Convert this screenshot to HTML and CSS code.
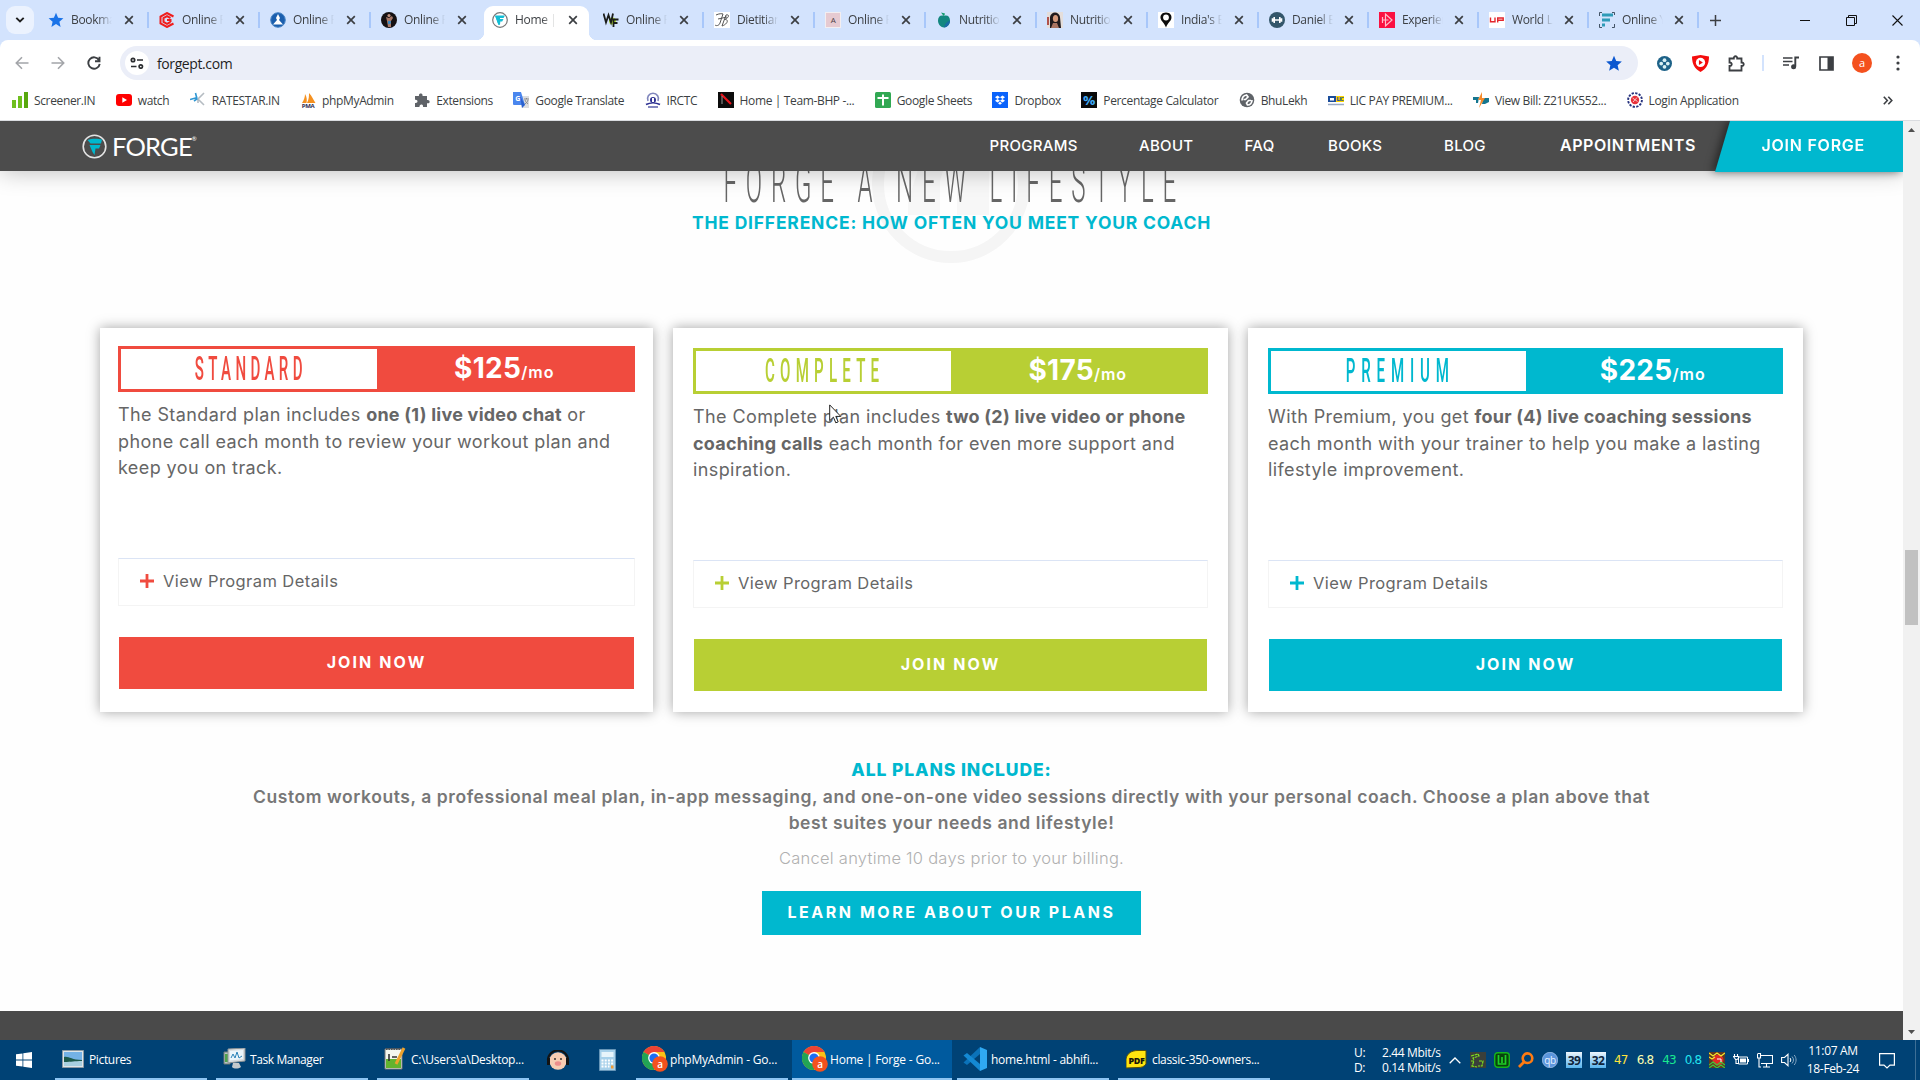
FILE: index.html
```html
<!DOCTYPE html>
<html lang="en">
<head>
<meta charset="utf-8">
<title>Home | Forge</title>
<link rel="stylesheet" href="styles.css">
</head>
<body>
<svg class="defs" aria-hidden="true">
  <symbol id="x" viewBox="0 0 10 10"><path d="M1.2 1.2l7.6 7.6M8.8 1.2L1.2 8.8" stroke="#3c3f43" stroke-width="1.7" fill="none"/></symbol>
  <symbol id="star" viewBox="0 0 16 16"><path d="M8 .8l2.1 4.9 5.3.5-4 3.5 1.200 5.200L8 12.100 3.400 14.900l1.200-5.200-4-3.500 5.300-.5z"/></symbol>
  <symbol id="chrome" viewBox="0 0 26 30">
    <circle cx="12" cy="12" r="12" fill="#fbc116"/>
    <path d="M12 12L1.600 6A12 12 0 0 1 22.400 6H12z" fill="#ea4335"/>
    <path d="M12 12L1.600 6A12 12 0 0 0 12 24L17.200 15z" fill="#22a455"/>
    <circle cx="12" cy="12" r="5.900" fill="#fff"/><circle cx="12" cy="12" r="4.600" fill="#1b6ef3"/>
    <circle cx="18" cy="18" r="7.800" fill="#f4511e"/>
    <text x="18" y="21.500" font-size="10" font-weight="600" text-anchor="middle" fill="#fff">a</text>
  </symbol>
  <symbol id="plus" viewBox="0 0 14 14"><path d="M7 0v14M0 7h14" stroke="currentColor" stroke-width="2.800"/></symbol>
</svg>

<div class="tabs">
  <div class="tab-search"><svg width="10" height="8" viewBox="0 0 10 8"><path d="M1.300 1.800L5 5.500l3.700-3.700" fill="none" stroke="#1f1f1f" stroke-width="1.900"/></svg></div>
  <div class="tab"><svg class="fav" fill="#1a73e8"><use href="#star"/></svg><span>Bookmarks</span><svg class="close"><use href="#x"/></svg></div>
  <div class="tab"><svg class="fav" viewBox="0 0 16 16"><path d="M14.500 4.500L8 1 1.500 4.500v7L8 15l6.500-3.500M11.500 6L8 4.200 4.500 6v4L8 11.800 11.500 10M8 8h3.500v2" fill="none" stroke="#f01d1d" stroke-width="2"/></svg><span>Online F</span><svg class="close"><use href="#x"/></svg></div>
  <div class="tab"><svg class="fav" viewBox="0 0 16 16"><circle cx="8" cy="8" r="7.300" fill="#1b5fae" stroke="#4a86c6"/><path d="M8 2l2 4-1 2 4 4.500H3L7 8 6 6z" fill="#fff"/></svg><span>Online F</span><svg class="close"><use href="#x"/></svg></div>
  <div class="tab before-active"><svg class="fav" viewBox="0 0 16 16"><circle cx="8" cy="8" r="8" fill="#151112"/><path d="M5 5l3 1 3-2 1 2-2 3v6H7l-1-6z" fill="#a87968"/><path d="M7 9h3l-.5 3H7z" fill="#3d8ac0"/><circle cx="8" cy="3.500" r="1.600" fill="#c49481"/></svg><span>Online F</span><svg class="close"><use href="#x"/></svg></div>
  <div class="tab active"><svg class="fav" viewBox="0 0 16 16"><circle cx="8" cy="8" r="7.300" fill="#fff" stroke="#777" stroke-width="1.200"/><path d="M3 3.500h10L11.500 6H8v1h3.500L10.200 9.400H8.300L8 12.800 6.500 13z" fill="#13bed5"/><path d="M3 3.500l3.500 9.500 1-6z" fill="#13bed5"/></svg><span>Home | F</span><svg class="close"><use href="#x"/></svg></div>
  <div class="tab"><svg class="fav" viewBox="0 0 16 16"><circle cx="9.500" cy="9" r="3.500" fill="#b5e236"/><path d="M.5 1.500l2.500 9L5.500 3 8 10.500 10 1.500M10.500 15V7.500h5M10.500 11h4" fill="none" stroke="#191c1a" stroke-width="1.800"/></svg><span>Online F</span><svg class="close"><use href="#x"/></svg></div>
  <div class="tab"><svg class="fav" viewBox="0 0 16 16"><path fill="#fff" d="M0 0h16v16H0z"/><path d="M2 3c3-1.500 6-1.500 7-1L6 11c-1 3-4 3-5 2M8 14L12 3c4-1 3 3-1.500 4.500C15 7 14 12 8 14M4 7l9-2" fill="none" stroke="#555" stroke-width="1"/></svg><span>Dietitian</span><svg class="close"><use href="#x"/></svg></div>
  <div class="tab"><svg class="fav" viewBox="0 0 16 16"><path fill="#f3eef0" d="M0 0h16v16H0z"/><path fill="#e6cad1" d="M1 1h14v14H1z"/><text x="8" y="11" font-size="8" text-anchor="middle" fill="#4b3d42">A</text></svg><span>Online F</span><svg class="close"><use href="#x"/></svg></div>
  <div class="tab"><svg class="fav" viewBox="0 0 16 16"><path d="M8 4c3-1.500 6 .5 6 4.500 0 4-3 7-6 7s-6-3-6-7C2 4.500 5 2.500 8 4z" fill="#13877f"/><path d="M8 15.500c3 0 6-3 6-7-3 1-5 3-6 7z" fill="#1a6aa5"/><path d="M5 .5l4 1-1 3z" fill="#129b6d"/></svg><span>Nutrition</span><svg class="close"><use href="#x"/></svg></div>
  <div class="tab"><svg class="fav" viewBox="0 0 16 16"><path fill="#e4dedb" d="M0 0h16v16H0z"/><path d="M3 16V5c1-6 9-6 10 0l1 11z" fill="#201a1d"/><ellipse cx="8.500" cy="6.500" rx="2.600" ry="3.600" fill="#d69a7c"/><path d="M4 16l2-5h4l2 5z" fill="#a97462"/><path d="M0 5h2v8H0z" fill="#b1534b"/></svg><span>Nutrition</span><svg class="close"><use href="#x"/></svg></div>
  <div class="tab"><svg class="fav" viewBox="0 0 16 16"><path fill="#fff" d="M0 0h16v16H0z"/><path d="M8 .5c4 0 6.300 3 5.300 6.200C12.500 9.500 9.500 11 8 15.500 6.500 11 3.500 9.500 2.700 6.700 1.700 3.500 4 .5 8 .5z" fill="#0c0c0c"/><circle cx="8" cy="5.500" r="2.900" fill="#fff"/></svg><span>India's B</span><svg class="close"><use href="#x"/></svg></div>
  <div class="tab n"><svg class="fav" viewBox="0 0 16 16"><circle cx="8" cy="8" r="8" fill="#33566a"/><path d="M3.500 8h9M5.200 5v6M10.800 5v6M3.500 6.200v3.600M12.500 6.200v3.600" stroke="#fff" stroke-width="1.600"/></svg><span>Daniel B</span><svg class="close"><use href="#x"/></svg></div>
  <div class="tab n"><svg class="fav" viewBox="0 0 16 16"><path fill="#fb1141" d="M0 0h16v16H0z"/><path d="M3.500 8h6M6.500 2v12l6.500-6zM3.500 5v6" fill="none" stroke="#ffc0cc" stroke-width="1.200"/></svg><span>Experience</span><svg class="close"><use href="#x"/></svg></div>
  <div class="tab n"><svg class="fav" viewBox="0 0 16 16"><path fill="#fff" d="M0 0h16v16H0z"/><path d="M1.500 5.500v4.200h4.500V5.500M8.700 10.500V6h5.500v2.300H8.700" fill="none" stroke="#e4262c" stroke-width="1.400"/></svg><span>World L</span><svg class="close"><use href="#x"/></svg></div>
  <div class="tab n"><svg class="fav" viewBox="0 0 16 16"><path d="M3 3h11M3 8h8M3 13h3" stroke="#2e9bb8" stroke-width="3"/><path d="M.5 4V.5H3M13 .5h2.500V3M.5 12v3.500H3M15.500 12v3.500H13" fill="none" stroke="#345" stroke-width=".9"/></svg><span>Online Y</span><svg class="close"><use href="#x"/></svg></div>
  <svg class="newtab" width="11" height="11" viewBox="0 0 11 11"><path d="M5.500 0v11M0 5.500h11" stroke="#3c3f43" stroke-width="1.500"/></svg>
  <div class="wincontrols">
    <svg width="11" height="11" viewBox="0 0 11 11"><path d="M0 5.500h10" stroke="#111"/></svg>
    <svg width="11" height="11" viewBox="0 0 11 11"><path d="M.5 2.500h8v8h-8zM2.500 2.500v-2h8v8h-2" fill="none" stroke="#111"/></svg>
    <svg width="11" height="11" viewBox="0 0 11 11"><path d="M.5.5l10 10M10.500.5l-10 10" stroke="#111" stroke-width="1.100"/></svg>
  </div>
</div>

<div class="toolbar">
  <div class="navbtns">
    <svg width="14" height="14" viewBox="0 0 14 14"><path d="M13.500 7H1.500M7 1.300L1.300 7 7 12.700" fill="none" stroke="#a3a5a9" stroke-width="1.600"/></svg>
    <svg width="14" height="14" viewBox="0 0 14 14"><path d="M.5 7h12M7 1.300L12.700 7 7 12.700" fill="none" stroke="#a3a5a9" stroke-width="1.600"/></svg>
    <svg width="14" height="14" viewBox="0 0 14 14"><path d="M12 4.200A5.700 5.700 0 1 0 12.700 7.800M12.500.7v4.500H8" fill="none" stroke="#3c3f43" stroke-width="1.900"/></svg>
  </div>
  <div class="omnibox">
    <div class="site"><svg width="14" height="12" viewBox="0 0 14 12"><g fill="none" stroke="#2b2d30" stroke-width="1.700"><circle cx="3" cy="3" r="1.700"/><path d="M7 3h6M1 9.500h5.500"/><circle cx="10.800" cy="9.500" r="1.700"/></g></svg></div>
    <span>forgept.com</span>
    <svg class="bm" width="18" height="17" fill="#0b57d0"><use href="#star"/></svg>
  </div>
  <div class="exts">
    <svg width="15" height="15" viewBox="0 0 16 16"><circle cx="8" cy="8" r="8" fill="#1d6288"/><g fill="#d9f1f5"><circle cx="8" cy="4.500" r="2"/><circle cx="8" cy="11.500" r="2"/><circle cx="4.500" cy="8" r="2"/><circle cx="11.500" cy="8" r="2"/></g><circle cx="8" cy="8" r="1.300" fill="#1d6288"/></svg>
    <svg width="17" height="17" viewBox="0 0 16 16"><path d="M8 0l8 1.500C16 9 13 13.500 8 16 3 13.500 0 9 0 1.500z" fill="#f40d0d"/><circle cx="8" cy="7" r="4.400" fill="#fff"/><path d="M6.500 4.700v4.600L10.200 7z" fill="#f40d0d"/></svg>
    <svg width="17" height="17" viewBox="0 0 17 17"><path d="M1.500 3.500h4.300C5.500.5 9.500.5 9.200 3.500h4.300v4c3-.3 3 3.800 0 3.500v4.500h-12V11c3 .3 3-3.800 0-3.500z" fill="none" stroke="#3c3f43" stroke-width="1.800"/></svg>
    <i class="sep"></i>
    <svg width="16" height="14" viewBox="0 0 16 14"><path d="M0 2h9.500M0 5.500h9.500M0 9h6" stroke="#3c3f43" stroke-width="1.700"/><path d="M12.300 10.500V1.500H16" fill="none" stroke="#3c3f43" stroke-width="1.900"/><circle cx="10.600" cy="10.800" r="2.500" fill="#3c3f43"/></svg>
    <svg width="15" height="15" viewBox="0 0 15 15"><path d="M1 1h13v13H1z" fill="none" stroke="#3c3f43" stroke-width="1.700"/><path d="M8.500 1H14v13H8.500z" fill="#3c3f43"/></svg>
    <b class="avatar">a</b>
    <svg width="4" height="16" viewBox="0 0 4 16" fill="#3c3f43"><circle cx="2" cy="2" r="1.600"/><circle cx="2" cy="8" r="1.600"/><circle cx="2" cy="14" r="1.600"/></svg>
  </div>
</div>

<div class="bookmarks">
  <div><svg viewBox="0 0 16 16"><path d="M0 8h4v8H0zM6 4h4v12H6z" fill="#6fbf1e"/><path d="M12 0h4v16h-4z" fill="#58a80e"/></svg>Screener.IN</div>
  <div><svg viewBox="0 0 16 16"><rect y="2" width="16" height="12" rx="3" fill="#f00"/><path d="M6.300 5.200v5.600L11 8z" fill="#fff"/></svg>watch</div>
  <div><svg viewBox="0 0 16 16"><path d="M8 7L14 1M8 7l6 6M8 7v4" stroke="#b5bcc2" stroke-width="1.600"/><path d="M0 7.500l7.500-2M5.500 1l1.500 6-3 2" stroke="#2f97d3" stroke-width="1.600" fill="none"/></svg>RATESTAR.IN</div>
  <div><svg viewBox="0 0 16 16"><path d="M2 11C4 8 5 5 5 2c2 3 2 6 1.500 9M7 11c2-4 2-7 2-10 3 3 4 6 6.500 10z" fill="#f59120"/><text x="8" y="16" font-size="6" font-weight="700" text-anchor="middle" fill="#2c2a52">PMA</text></svg>phpMyAdmin</div>
  <div><svg viewBox="0 0 16 16"><path d="M1 4h4c-.8-3.500 4.300-3.500 3.500 0H13v4c3.500-.7 3.500 4 0 3.300V15H9c.8-3.300-4-3.300-3.500 0H1v-4c3.300.7 3.300-4 0-3.300z" fill="#5f6368"/></svg>Extensions</div>
  <div><svg viewBox="0 0 16 16"><path d="M6 4h10v12H9z" fill="#dcdde0"/><path d="M0 0h8l4 13H1a1 1 0 0 1-1-1z" fill="#4a86ee"/><path d="M7 4l5 9-3 3z" fill="#2a60ce"/><text x="4.500" y="8.500" font-size="7" font-weight="700" text-anchor="middle" fill="#fff">G</text><path d="M11 7h5M13.500 6v1M12 8c.5 2 2 3 3 4M15 8c-.5 2-1.500 3-3 4" stroke="#777" fill="none" stroke-width=".8"/></svg>Google Translate</div>
  <div><svg viewBox="0 0 16 16"><path d="M3 9a5.500 5.500 0 1 1 10 0" fill="none" stroke="#8187bd" stroke-width="1.600"/><circle cx="8" cy="8" r="3" fill="#2e3192"/><path d="M7 6h2v4H7z" fill="#fff"/><path d="M1 12.500c4-2 10-2 14 0" stroke="#2e3192" stroke-width="1.700" fill="none"/><path d="M3 15h10" stroke="#6669b0" stroke-width="1.600"/></svg>IRCTC</div>
  <div><svg viewBox="0 0 16 16"><path fill="#0c0c0c" d="M0 0h16v16H0z"/><path d="M3 2l3 3 7 7" stroke="#e8151d" stroke-width="2.200" fill="none"/><path d="M4 4v8" stroke="#999" stroke-width="1"/></svg>Home | Team-BHP -...</div>
  <div><svg viewBox="0 0 16 16"><rect width="16" height="16" rx="1.500" fill="#31a853"/><path d="M2.500 6h11M8 2.500v11" stroke="#fff" stroke-width="2"/></svg>Google Sheets</div>
  <div><svg viewBox="0 0 16 16"><path fill="#0a63fb" d="M0 0h16v16H0z"/><path d="M5.500 3.500L8 5.200 5.500 7 3 5.200zM10.500 3.500L13 5.200 10.500 7 8 5.200zM5.500 7L8 8.700l-2.500 1.800L3 8.700zM10.500 7L13 8.700l-2.500 1.800L8 8.700zM8 9.800l2 1.400-2 1.500-2-1.500z" fill="#fff"/></svg>Dropbox</div>
  <div><svg viewBox="0 0 16 16"><path fill="#0a0a0a" d="M0 0h16v16H0z"/><text x="8" y="13" font-size="13" font-weight="700" text-anchor="middle" fill="#3fa9f5" textLength="12" lengthAdjust="spacingAndGlyphs">%</text></svg>Percentage Calculator</div>
  <div><svg viewBox="0 0 16 16"><circle cx="8" cy="8" r="7.300" fill="#5f6368"/><path d="M3 8.500c0-3 2-5 4.500-5.500L9 5 6.500 7.500H4.500M13 8c0 3-2 5-4.500 5l-1-2 2-2.500H12" fill="none" stroke="#fff" stroke-width="1.700"/></svg>BhuLekh</div>
  <div><svg viewBox="0 0 16 16"><path fill="#1b4d9b" d="M0 4h8v6H0z"/><path fill="#ffd400" d="M8 4h8v6H8z"/><path d="M2 6h4v2.500H2z" fill="#fff"/><text x="12" y="9.300" font-size="6" font-weight="700" text-anchor="middle" fill="#1b4d9b" textLength="7">LIC</text><path d="M0 12.500h16" stroke="#9aaac5" stroke-width="1.500"/></svg>LIC PAY PREMIUM...</div>
  <div><svg viewBox="0 0 16 16"><path d="M0 5h6l-1 6H3V8H0zM10 6h6v4l-4 2H9z" fill="#15768f"/><path d="M9 0L5 8h3l-2 8 6-10H9z" fill="#f58a2b"/></svg>View Bill: Z21UK552...</div>
  <div><svg viewBox="0 0 16 16"><circle cx="8" cy="8" r="6.900" fill="#fff" stroke="#25317d" stroke-width="1.900" stroke-dasharray="2.300 1.310"/><circle cx="8" cy="8" r="4.200" fill="#e7303a"/><path d="M5.500 6l5 3.500M10 5.500l-4 4.500" stroke="#f9c7c7" stroke-width="1"/></svg>Login Application</div>
  <svg class="more" width="10" height="9" viewBox="0 0 10 9"><path d="M.8.800L4.300 4.500.800 8.200M5.300.800L8.800 4.500 5.300 8.200" fill="none" stroke="#3c3f43" stroke-width="1.600"/></svg>
</div>

<div class="viewport">
  <div class="page">
    <header class="site-header">
      <div class="logo">
        <svg width="25" height="25" viewBox="0 0 25 25"><circle cx="12.500" cy="12.500" r="11.300" fill="none" stroke="#e4e4e4" stroke-width="1.600"/><path d="M5.500 6C9 4.500 16 4.500 20 5.500L19 9.500H8.500zM7.500 11h11l-1.500 3.500h-3.500l-1 6.500-2-3z" fill="#00b8cf"/></svg>
        <span>FORGE</span><sup>®</sup>
      </div>
      <nav>
        <a>PROGRAMS</a><a>ABOUT</a><a>FAQ</a><a>BOOKS</a><a>BLOG</a><a class="appt">APPOINTMENTS</a>
      </nav>
      <div class="join-wrap"><a class="join">JOIN FORGE</a></div>
    </header>

    <section class="hero">
      <svg class="mark" width="158" height="158" viewBox="0 0 158 158"><circle cx="79" cy="79" r="73" fill="none" stroke="#f5f5f5" stroke-width="12"/><path d="M47 62h25l-4 14v34H36V96zM93 62h24v48H85V82z" fill="#f7f7f7"/></svg>
      <h2><span>FORGE A NEW LIFESTYLE</span></h2>
      <h3>THE DIFFERENCE: HOW OFTEN YOU MEET YOUR COACH</h3>
    </section>

    <section class="plans">
      <article class="plan red">
        <div class="head"><div class="name"><span>STANDARD</span></div><div class="price">$125<small>/mo</small></div></div>
        <p>The Standard plan includes <b>one (1) live video chat</b> or<br>phone call each month to review your workout plan and<br>keep you on track.</p>
        <div class="details"><svg width="14" height="14"><use href="#plus"/></svg>View Program Details</div>
        <a class="btn">JOIN NOW</a>
      </article>
      <article class="plan green">
        <div class="head"><div class="name"><span>COMPLETE</span></div><div class="price">$175<small>/mo</small></div></div>
        <p>The Complete plan includes <b>two (2) live video or phone<br>coaching calls</b> each month for even more support and<br>inspiration.</p>
        <div class="details"><svg width="14" height="14"><use href="#plus"/></svg>View Program Details</div>
        <a class="btn">JOIN NOW</a>
      </article>
      <article class="plan teal">
        <div class="head"><div class="name"><span>PREMIUM</span></div><div class="price">$225<small>/mo</small></div></div>
        <p>With Premium, you get <b>four (4) live coaching sessions</b><br>each month with your trainer to help you make a lasting<br>lifestyle improvement.</p>
        <div class="details"><svg width="14" height="14"><use href="#plus"/></svg>View Program Details</div>
        <a class="btn">JOIN NOW</a>
      </article>
    </section>

    <section class="include">
      <h4>ALL PLANS INCLUDE:</h4>
      <p class="lead">Custom workouts, a professional meal plan, in-app messaging, and one-on-one video sessions directly with your personal coach. Choose a plan above that<br>best suites your needs and lifestyle!</p>
      <p class="cancel">Cancel anytime 10 days prior to your billing.</p>
      <a class="learn">LEARN MORE ABOUT OUR PLANS</a>
    </section>
    <footer class="dark"></footer>
  </div>
  <div class="scrollbar">
    <svg width="17" height="17" viewBox="0 0 17 17"><path d="M5 11l3.500-4 3.500 4z" fill="#505050"/></svg>
    <div class="track"><div class="thumb"></div></div>
    <svg width="17" height="17" viewBox="0 0 17 17"><path d="M5 7l3.500 4L12 7z" fill="#505050"/></svg>
  </div>
</div>

<svg class="cursor" width="13" height="20" viewBox="0 0 13 20"><path d="M.7.900v15.800l3.700-3.500 2.400 5.600 2.400-1-2.400-5.400h5z" fill="#fff" stroke="#222" stroke-width="1"/></svg>

<div class="taskbar">
  <div class="start"><svg width="16" height="16" viewBox="0 0 16 16" fill="#fff"><path d="M0 2.300L6.500 1.400v6.200H0zM7.300 1.300L16 0v7.600H7.300zM0 8.400h6.500v6.200L0 13.700zM7.300 8.400H16V16l-8.700-1.300z"/></svg></div>
  <div class="task pics"><svg width="22" height="18" viewBox="0 0 22 18"><path d="M.5.500h21v17H.5z" fill="#dfe6ea" stroke="#8c9aa3"/><path d="M2 2h18v14H2z" fill="#74b2e6"/><path d="M2 7c5-1 7 3 18 3v6H2z" fill="#1d5a4b"/><path d="M2 12c8 0 10-1 18-1v5H2z" fill="#a8d0e0"/></svg>Pictures</div>
  <div class="task tm"><svg width="24" height="22" viewBox="0 0 24 22"><path d="M1 4h6v12H1z" fill="#b9c4c0" stroke="#6e7a78"/><path d="M2 6h3v8H2z" fill="#4fa24c"/><path d="M5 1l17-1v13L5 15z" fill="#d8dcde" stroke="#8a9296"/><path d="M7 3l13-1v9L7 12.500z" fill="#eaf5fb"/><path d="M8 10l2-4 2 4 2-6 2 6 3-2" fill="none" stroke="#2a82b8"/><path d="M10 15h6l2 4c-3 2-7 2-9 0z" fill="#c4c9cc"/></svg>Task Manager</div>
  <div class="task np"><svg width="22" height="24" viewBox="0 0 22 24"><path d="M1 2h17v20H1z" fill="#f4f6ee" stroke="#777"/><path d="M2 12h15v9H2z" fill="#63b32e"/><path d="M2 2h15" stroke="#555" stroke-width="2" stroke-dasharray="1.500 1"/><path d="M5 7v7M8 10h5" stroke="#333" stroke-width="1.600"/><path d="M20 1L12 17" stroke="#eea22c" stroke-width="3"/></svg>C:\Users\a\Desktop...</div>
  <div class="pin pig"><svg width="24" height="20" viewBox="0 0 24 20"><path d="M2 10a10 9.500 0 0 1 20 0" fill="none" stroke="#131313" stroke-width="2.200"/><circle cx="12" cy="11" r="8.700" fill="#f8cdb3"/><path d="M1 8h3v7H1zM20 8h3v7h-3z" fill="#131313"/><ellipse cx="12" cy="13.500" rx="3.200" ry="2.300" fill="#ee8e8d"/><circle cx="9" cy="9" r=".9" fill="#222"/><circle cx="15" cy="9" r=".9" fill="#222"/></svg></div>
  <div class="pin calc"><svg width="17" height="22" viewBox="0 0 17 22"><path d="M.5.500h16v21H.5z" fill="#a7d0ea" stroke="#6796b8"/><path d="M2.500 3h12v5h-12z" fill="#e7f4fb"/><path d="M2.500 11.500h12M2.500 14.500h12M2.500 17.500h8" stroke="#fff" stroke-width="1.800" stroke-dasharray="2 1.200"/><path d="M12 16.500h2.500v3H12z" fill="#f29b35"/></svg></div>
  <div class="task chr"><svg width="26" height="30"><use href="#chrome"/></svg>phpMyAdmin - Go...</div>
  <div class="task chr on"><svg width="26" height="30"><use href="#chrome"/></svg>Home | Forge - Go...</div>
  <div class="task code"><svg width="24" height="24" viewBox="0 0 24 24"><path d="M17 0l7 3v18l-7 3z" fill="#2fa9f2"/><path d="M17 0v7L4 18l-3.500-2.500z" fill="#0b72b9"/><path d="M17 24v-7L4 6 .5 8.500z" fill="#1489d3"/></svg>home.html - abhifi...</div>
  <div class="task pdf"><svg width="21" height="19" viewBox="0 0 21 19"><path d="M0 18V9C1 3 6 .5 12 .5h8V14c-2 3-5 3.500-8 3.500z" fill="#ffe50f" stroke="#55500d"/><text x="10.500" y="13.500" font-size="9" font-weight="800" text-anchor="middle" fill="#17160a" textLength="16" lengthAdjust="spacingAndGlyphs">PDF</text></svg>classic-350-owners...</div>

  <div class="tray">
    <div class="net"><span>U:</span><span>2.44 Mbit/s</span><span>D:</span><span>0.14 Mbit/s</span></div>
    <svg class="up" width="12" height="7" viewBox="0 0 12 7"><path d="M.7 6.300L6 1l5.300 5.300" fill="none" stroke="#fff" stroke-width="1.300"/></svg>
    <svg width="16" height="16" viewBox="0 0 16 16"><path fill="#3a3f3a" d="M0 0h16v16H0z"/><path d="M1 4l7-2 1 2-6 2 1 2M1 9h3l-2 5 5 1M9 9h4l-1 5H8" fill="none" stroke="#7ee01f" stroke-width="1.200" stroke-dasharray="3 .7"/></svg>
    <svg width="16" height="16" viewBox="0 0 16 16"><rect x=".7" y=".7" width="14.600" height="14.600" rx="3" fill="#09430d" stroke="#15b51c" stroke-width="1.400"/><path d="M4.500 3v9h7V3M8 5v6" fill="none" stroke="#1fd028" stroke-width="1.700"/></svg>
    <svg width="16" height="16" viewBox="0 0 16 16"><circle cx="9.500" cy="6.200" r="4.800" fill="none" stroke="#ff7b12" stroke-width="2.600"/><path d="M6 10l-5 5" stroke="#ff7b12" stroke-width="2.800"/></svg>
    <svg width="16" height="16" viewBox="0 0 16 16"><circle cx="8" cy="8" r="7.700" fill="#5b95dc" stroke="#a9caf1" stroke-width=".7"/><text x="8" y="11.500" font-size="10" text-anchor="middle" fill="#e7f2ff">qb</text></svg>
    <b class="temp">39</b><b class="temp">32</b>
    <span class="num y">47</span><span class="num p">6.8</span><span class="num g">43</span><span class="num c">0.8</span>
    <svg class="hw" width="16" height="16" viewBox="0 0 16 16"><path fill="#5f3720" d="M0 0h16v16H0z"/><circle cx="9" cy="8" r="5.500" fill="#e02b25"/><path d="M0 1l4 3 4-3 4 3 4-3M0 5l3 2 3-2" stroke="#f5e72e" fill="none" stroke-width="1.300"/><path d="M0 13l4-3 4 3 4-3 4 3M0 16l4-3 4 3 4-3 4 3" stroke="#3ec63a" fill="none" stroke-width="1.200"/><path d="M8 7h4v3" stroke="#fff" fill="none"/></svg>
    <svg class="bat" width="16" height="12" viewBox="0 0 16 12"><path d="M1.500 0v2M4.500 0v2M.5 2.500h5v2l-2.500 1.500zM3 6v3.500h2" fill="none" stroke="#fff" stroke-width="1.100"/><path d="M5.500 3h9v7h-9z" fill="none" stroke="#fff"/><path d="M7 4.500h6v4H7z" fill="#fff"/><path d="M15.500 5v3" stroke="#fff"/></svg>
    <svg class="lan" width="16" height="16" viewBox="0 0 16 16"><path d="M4 3.500h11.500v8H4M9.500 11.500v3M6 15h7M.5 2v4h3V1.500h-3M2 6v9h2" fill="none" stroke="#fff" stroke-width="1.100"/></svg>
    <svg class="snd" width="16" height="14" viewBox="0 0 16 14"><path d="M.6 4.500h2.900L7 1.300v11.400L3.500 9.500H.6z" fill="none" stroke="#fff" stroke-width="1.100"/><path d="M9 5c1 1 1 3 0 4" fill="none" stroke="#fff"/><path d="M11 3.500c2 2 2 5 0 7M13.200 2c2.500 3 2.500 7 0 10" fill="none" stroke="#86a8c4"/></svg>
    <div class="clock">11:07 AM<br>18-Feb-24</div>
    <svg class="act" width="16" height="16" viewBox="0 0 16 16"><path d="M.6.600h14.800v11.500H11L8 15l-3-2.900H.6z" fill="none" stroke="#fff" stroke-width="1.200"/></svg>
    <i class="peek"></i>
  </div>
</div>
</body>
</html>
```
FILE: styles.css
```css
* { box-sizing: border-box; }
body { margin: 0; width: 1920px; height: 1080px; overflow: hidden; display: flex; flex-direction: column; background: #fff; font-family: "Open Sans", sans-serif; }
svg { display: block; flex: none; }
.defs { position: absolute; width: 0; height: 0; }
h2, h3, h4, p { margin: 0; }

/* browser tabs */
.tabs { height: 40px; flex: none; background: #d3e3fd; display: flex; align-items: center; font-size: 12px; letter-spacing: -.34px; color: #3c3f43; }
.tab-search { width: 28px; height: 28px; margin: 0 3px 0 6px; border-radius: 9px; background: #ebf2fe; display: flex; align-items: center; justify-content: center; }
.tab { width: 111px; height: 34px; margin-top: 6px; padding: 0 14px 6px 12px; display: flex; align-items: center; position: relative; flex: none; }
.tab.n { width: 110px; }
.tab::after { content: ""; position: absolute; right: -1px; top: 6px; width: 2px; height: 16px; background: #a8c7fa; }
.tab.active::after, .tab.before-active::after { display: none; }
.tab .fav { width: 16px; height: 16px; margin: 0 7px 0 -1px; }
.tab span { width: 41px; overflow: hidden; white-space: nowrap; line-height: 20px; mask-image: linear-gradient(90deg, #000 65%, transparent); }
.tab .close { width: 10px; height: 10px; margin-left: auto; }
.tab.active { background: #fff; border-radius: 9px 9px 0 0; width: 105px; margin-left: 3px; margin-right: 3px; padding: 0 11px 6px 9px; }
.tab.active::before { content: ""; position: absolute; left: -8px; right: -8px; bottom: 0; height: 8px; background: radial-gradient(circle at 0 0, transparent 8px, #fff 8.500px) left / 8px 8px no-repeat, radial-gradient(circle at 100% 0, transparent 8px, #fff 8.500px) right / 8px 8px no-repeat; }
.newtab { margin-left: 12px; }
.wincontrols { margin: 0 17px 0 auto; display: flex; gap: 35px; }

/* toolbar */
.toolbar { height: 46px; flex: none; display: flex; align-items: center; background: linear-gradient(#d3e3fd 8px, #fff 8px); position: relative; }
.toolbar::before { content: ""; position: absolute; inset: 0; background: #fff; border-radius: 8px 8px 0 0; }
.toolbar > * { position: relative; }
.navbtns { width: 120px; padding-left: 15px; display: flex; gap: 22px; }
.omnibox { width: 1518px; height: 34px; border-radius: 17px; background: #ebeef8; display: flex; align-items: center; padding: 0 15px 0 5px; font-size: 14px; letter-spacing: -.4px; color: #1f1f1f; }
.site { width: 24px; height: 24px; border-radius: 12px; background: #fff; display: flex; align-items: center; justify-content: center; margin-right: 8px; }
.bm { margin-left: auto; }
.exts { display: flex; align-items: center; margin-left: 19px; }
.exts > :nth-child(2) { margin-left: 20px; }
.exts > :nth-child(3) { margin-left: 19px; }
.sep { width: 2px; height: 16px; background: #d3e3fd; margin: 0 19px 0 17px; }
.exts > :nth-child(6) { margin-left: 20px; }
.avatar { width: 20px; height: 20px; border-radius: 10px; background: #f4511e; color: #fff; font-size: 11px; font-weight: 400; line-height: 19px; text-align: center; margin: 0 24px 0 18px; }

/* bookmarks */
.bookmarks { height: 34px; padding: 0 27px 6px 12px; flex: none; display: flex; align-items: center; font-size: 12px; letter-spacing: -.36px; color: #3c3f43; white-space: nowrap; background: #fff; gap: 20.400px; }
.bookmarks div { display: flex; align-items: center; gap: 6px; }
.bookmarks div svg { width: 16px; height: 16px; }
.bookmarks .more { margin-left: auto; }

/* page */
.viewport { height: 920px; flex: none; display: flex; border-top: 1px solid #dadce0; }
.page { width: 1903px; overflow: hidden; font-family: Inter, sans-serif; color: #666; display: flex; flex-direction: column; background: #fefefe; }
.site-header { height: 50px; flex: none; background: #4c4c4c; box-shadow: 0 0 25px rgba(0,0,0,.28); position: relative; z-index: 2; display: flex; align-items: center; color: #fff; }
.logo { flex: 0 0 989.500px; padding-left: 82px; display: flex; align-items: center; font: 400 25.500px/30px Lato, sans-serif; letter-spacing: -.8px; }
.logo span { margin: -1px 0 0 5px; }
.logo sup { font-size: 6px; align-self: flex-start; line-height: 14px; }
nav { display: grid; grid-template-columns: 149.500px 105.500px 83.500px 116px 116px auto; align-items: baseline; font-size: 15px; font-weight: 500; letter-spacing: .3px; margin-top: -2px; flex: none; }
.appt { font-weight: 600; font-size: 16px; letter-spacing: .55px; }
.join-wrap { position: absolute; right: 0; top: 0; filter: drop-shadow(-3px 0 4px rgba(0,0,0,.5)); }
.join { display: block; width: 188px; height: 51px; clip-path: polygon(15px 0, 100% 0, 100% 100%, 0 100%); background: #00b8cf; font-weight: 600; font-size: 16px; line-height: 49px; letter-spacing: .75px; padding-left: 46.500px; }
.hero { height: 157px; flex: none; text-align: center; position: relative; }
.mark { position: absolute; left: 872px; top: -66px; }
.hero h2 { font: 300 56px/60px Roboto, sans-serif; letter-spacing: 20.500px; margin-top: -18px; color: #666; position: relative; }
.hero h2 span { display: inline-block; padding-left: 12px; transform: scaleX(.43); white-space: nowrap; }
.hero h3 { font-size: 17.500px; font-weight: 700; line-height: 24px; letter-spacing: .8px; color: #00b8cf; margin-top: -2px; position: relative; }

.plans { display: flex; gap: 20px; padding-left: 100px; flex: none; height: 384px; }
.plan { width: 555px; background: #fff; box-shadow: 0 0 12px rgba(0,0,0,.36); padding: 20px 20px 0; position: relative; }
.plan.red { width: 553px; padding: 18px 18px 0; --c: #f04b3f; --ls: 9.700px; }
.plan.green { --c: #b8cf34; --ls: 11.600px; }
.plan.teal { --c: #00b8cf; --ls: 13px; }
.head { height: 46px; background: var(--c); display: flex; padding: 3px; }
.name { width: 50%; background: #fff; color: var(--c); display: flex; align-items: center; justify-content: center; font: 500 33.500px/38px Roboto, sans-serif; letter-spacing: var(--ls); padding-bottom: 1px; }
.name span { transform: scaleX(.45); padding-left: 7px; white-space: nowrap; margin: 0 -60px; }
.price { width: 50%; color: #fff; font-weight: 700; font-size: 28px; line-height: 38px; letter-spacing: .3px; text-align: center; }
.price small { font-size: 16px; font-weight: 600; letter-spacing: 1px; }
.plan p { margin-top: 10px; height: 156px; font-size: 18px; line-height: 26.500px; letter-spacing: .4px; white-space: nowrap; }
.plan p b { letter-spacing: .24px; }
.details { height: 48px; border: 1px solid #f4f4f4; border-top-color: #dbe4f5; display: flex; align-items: center; gap: 9px; padding-left: 21px; font-size: 16.500px; line-height: 22px; letter-spacing: .42px; padding-bottom: 2px; }
.details svg { color: var(--c); }
.btn { display: block; height: 52px; margin: 31px 1px 0; background: var(--c); color: #fff; font-size: 16px; font-weight: 700; letter-spacing: 2.100px; line-height: 51px; text-align: center; }

.include { text-align: center; padding-top: 45px; flex: none; height: 299px; }
.include h4 { font-size: 17.500px; line-height: 26.500px; font-weight: 800; letter-spacing: .9px; color: #00b8cf; }
.lead { font-size: 17.500px; line-height: 26.500px; font-weight: 600; letter-spacing: .565px; color: #777; white-space: nowrap; }
.cancel { font-size: 16.500px; line-height: 26px; letter-spacing: .25px; font-weight: 300; color: #b0b0b0; margin-top: 8px; }
.learn { display: block; width: 379px; height: 44px; margin: 20px auto 0; background: #00b8cf; color: #fff; font-size: 16px; font-weight: 700; letter-spacing: 2.550px; line-height: 43px; }
.dark { height: 29px; background: #4a4a4a; flex: none; }

.scrollbar { width: 17px; background: #f1f1f1; display: flex; flex-direction: column; justify-content: space-between; }
.track { flex: 1; padding: 412px 2px 0; }
.thumb { height: 75px; background: #c1c1c1; }
.cursor { position: absolute; left: 829px; top: 404px; z-index: 3; }

/* taskbar */
.taskbar { height: 40px; flex: none; background: #004275; color: #fff; display: flex; align-items: center; font-size: 12px; letter-spacing: -.35px; white-space: nowrap; }
.start { width: 55px; padding-left: 16px; }
.task { width: 152px; height: 40px; border-bottom: 2px solid #8ec5f2; display: flex; align-items: center; flex: none; padding-left: 7px; gap: 5px; }
.tm { margin: 0 9px; gap: 3px; letter-spacing: -.4px; }
.np { letter-spacing: -.25px; }
.pin { width: 49px; display: flex; justify-content: center; }
.pig { width: 58px; }
.calc { padding-right: 9px; }
.task.chr { padding-left: 6px; gap: 2px; letter-spacing: -.2px; }
.task.chr svg { margin-top: 4px; }
.task.on { width: 160px; margin: 0 5px 0 4px; padding-left: 10px; background: #005a9e; }
.code { padding-left: 6px; gap: 4px; letter-spacing: -.25px; }
.pdf { margin-left: 9px; padding-left: 8px; }
.tray { margin-left: auto; display: flex; align-items: center; height: 40px; }
.tray > svg { margin-right: 8px; }
.net { display: grid; grid-template-columns: 28px 58px; line-height: 15px; text-align: right; margin-right: 9px; }
.net span:nth-child(odd) { text-align: left; }
.tray .up { margin-right: 9px; }
.temp { width: 16px; height: 16px; margin-right: 8px; background: linear-gradient(#eef6fd, #57b4ee); color: #10243a; font: 700 12px/17px "Open Sans", sans-serif; text-align: center; letter-spacing: -.5px; }
.num { font: 12px/16px "DejaVu Sans", sans-serif; letter-spacing: -.8px; width: 24px; text-align: center; }
.num.y { width: 19px; text-align: left; }
.y { color: #ffe23b; } .p { color: #fdffb0; } .g { color: #19e890; } .c { color: #23e5ee; }
.tray .hw { margin-left: 4px; }
.clock { width: 64px; text-align: center; line-height: 18px; margin-left: -4px; }
.tray .act { margin: 2px 20px 0 14px; }
.peek { width: 1px; height: 40px; background: #3d6f96; margin-right: 4px; }
```
